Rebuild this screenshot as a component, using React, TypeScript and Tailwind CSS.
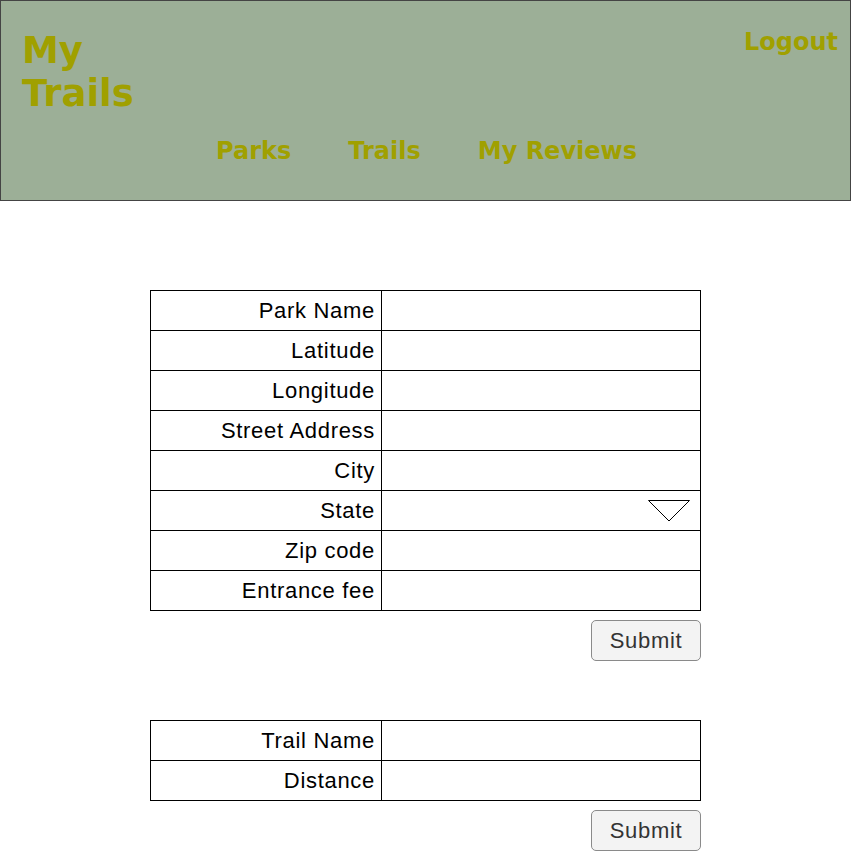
const navFont = { fontFamily: '"DejaVu Sans", Verdana, sans-serif' };
const formFont = { fontFamily: '"Liberation Sans", Arial, Helvetica, sans-serif' };

const parkFields = [
  'Park Name',
  'Latitude',
  'Longitude',
  'Street Address',
  'City',
  'State',
  'Zip code',
  'Entrance fee',
];

const trailFields = ['Trail Name', 'Distance'];

function Header() {
  return (
    <header
      className="h-[201px] border border-[#444] bg-[#9caf97] font-bold text-[#a0a000]"
      style={navFont}
    >
      <div className="flex items-start justify-between">
        <div className="w-[130px] pl-[21px] pt-[28px] text-[37px] leading-[normal]">My Trails</div>
        <div className="pr-[12px] pt-[27px] text-[24px] leading-[normal]">Logout</div>
      </div>
      <nav className="mt-[22px] flex gap-[57px] pl-[215px] text-[24px] leading-[normal]">
        <span>Parks</span>
        <span>Trails</span>
        <span>My Reviews</span>
      </nav>
    </header>
  );
}

function DropArrow() {
  return (
    <svg width="42" height="22" viewBox="0 0 42 22" className="absolute right-[10px] top-[9px]">
      <polygon points="0.5,0.5 41.5,0.5 21,21" fill="white" stroke="black" strokeWidth="1" />
    </svg>
  );
}

function FieldTable({ fields }: { fields: string[] }) {
  return (
    <table className="w-[551px] border-collapse" style={formFont}>
      <tbody>
        {fields.map((f) => (
          <tr key={f} className="h-[40px]">
            <td className="w-[231px] border border-black pr-[6px] text-right text-[22px] tracking-[0.7px] text-black">
              {f}
            </td>
            <td className="relative border border-black p-0">
              {f === 'State' && <DropArrow />}
            </td>
          </tr>
        ))}
      </tbody>
    </table>
  );
}

function SubmitButton() {
  return (
    <div className="mt-[9px] flex justify-end">
      <button
        className="h-[41px] w-[110px] rounded-[5px] border border-[#8a8a8a] bg-[#f3f3f3] text-[22px] tracking-[0.7px] text-[#333]"
        style={formFont}
      >
        Submit
      </button>
    </div>
  );
}

export default function App() {
  return (
    <div className="min-h-[851px] bg-white">
      <Header />
      <main className="mx-auto w-[551px] pt-[89px]">
        <FieldTable fields={parkFields} />
        <SubmitButton />
        <div className="mt-[59px]">
          <FieldTable fields={trailFields} />
        </div>
        <SubmitButton />
      </main>
    </div>
  );
}
